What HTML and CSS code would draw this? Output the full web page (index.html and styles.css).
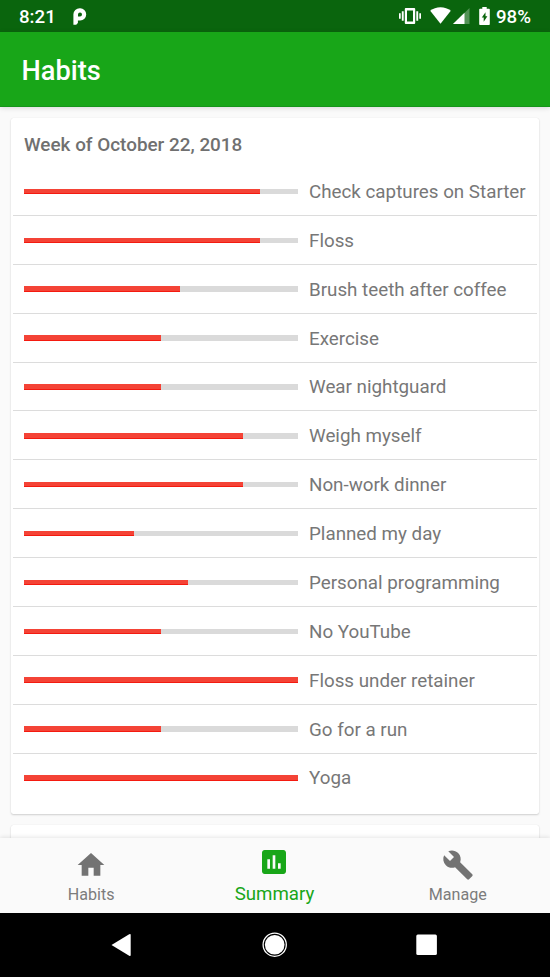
FILE: index.html
```html
<!DOCTYPE html>
<html lang="en">
<head>
<meta charset="utf-8">
<title>Habits</title>
<link rel="stylesheet" href="styles.css">
</head>
<body>
<div class="screen">
  <div class="status">
    <span class="time">8:21</span>
    <svg class="pie" width="14" height="18" viewBox="0 0 14 18"><path fill-rule="evenodd" d="M.4 16.700V6.300A6.300 6 0 0 1 6.800.3 6 5.900 0 0 1 13.200 6.300 6 5.900 0 0 1 7 12.400H4.900v2.600L3.200 16.700zM5 8.400h2A2 2 0 1 0 5 6.400z" fill="#fff"/></svg>
    <svg class="vibrate" width="22" height="16" viewBox="0 0 22 16" fill="#fff"><path d="M6.800 0h8.400q1 0 1 1v14q0 1-1 1H6.800q-1 0-1-1V1q0-1 1-1zM8 2.600v10.800h6V2.600z" fill-rule="evenodd"/><path d="M0 5.200h1.700v5.600H0zM2.800 3.200h1.900v9.600H2.800zM17.300 3.200h1.900v9.600h-1.900zM20.300 5.200H22v5.600h-1.700z"/></svg>
    <svg class="wifi" width="21" height="17" viewBox="0 0 21 17"><path d="M10.500 16.800.2 3.800Q4.500.3 10.500.3T20.800 3.800z" fill="#fff"/></svg>
    <svg class="signal" width="17" height="16" viewBox="0 0 17 16"><path d="M0 16 16.500 0v16z" fill="#fff" opacity=".3"/><path d="M0 16 11.500 4.800V16z" fill="#fff"/></svg>
    <svg class="battery" width="11" height="18" viewBox="0 0 11 18"><path d="M3.300 0h4.400v1.800H10q.8 0 .8.800v14.600q0 .8-.8.800H1q-.8 0-.8-.8V2.600q0-.8.8-.8h2.300z" fill="#fff"/><path d="M6.500 5.200v4h1.900L4.700 14.800v-4.200H2.800z" fill="#0a650d"/></svg>
    <span class="percent">98%</span>
  </div>
  <header class="appbar"><h1>Habits</h1></header>
  <main class="content">
    <section class="card">
      <h2>Week of October 22, 2018</h2>
      <ul>
        <li><span class="track"><span class="fill" style="width:86%"></span></span><span class="name">Check captures on Starter</span></li>
        <li><span class="track"><span class="fill" style="width:86%"></span></span><span class="name">Floss</span></li>
        <li><span class="track"><span class="fill" style="width:57.1%"></span></span><span class="name">Brush teeth after coffee</span></li>
        <li><span class="track"><span class="fill" style="width:50%"></span></span><span class="name">Exercise</span></li>
        <li><span class="track"><span class="fill" style="width:50%"></span></span><span class="name">Wear nightguard</span></li>
        <li><span class="track"><span class="fill" style="width:80%"></span></span><span class="name">Weigh myself</span></li>
        <li><span class="track"><span class="fill" style="width:80%"></span></span><span class="name">Non-work dinner</span></li>
        <li><span class="track"><span class="fill" style="width:40%"></span></span><span class="name">Planned my day</span></li>
        <li><span class="track"><span class="fill" style="width:60%"></span></span><span class="name">Personal programming</span></li>
        <li><span class="track"><span class="fill" style="width:50%"></span></span><span class="name">No YouTube</span></li>
        <li><span class="track"><span class="fill" style="width:100%"></span></span><span class="name">Floss under retainer</span></li>
        <li><span class="track"><span class="fill" style="width:50%"></span></span><span class="name">Go for a run</span></li>
        <li><span class="track"><span class="fill" style="width:100%"></span></span><span class="name">Yoga</span></li>
      </ul>
    </section>
    <section class="card next"></section>
  </main>
  <nav class="tabs">
    <a class="tab"><svg width="32" height="32" viewBox="0 0 24 24"><path d="M10 20v-6h4v6h5v-8h3L12 3 2 12h3v8z"/></svg><span>Habits</span></a>
    <a class="tab active"><svg width="32" height="32" viewBox="0 0 24 24"><path d="M19 3H5c-1.100 0-2 .9-2 2v14c0 1.100.9 2 2 2h14c1.100 0 2-.9 2-2V5c0-1.100-.9-2-2-2zM9 17H7v-7h2v7zm4 0h-2V7h2v10zm4 0h-2v-4h2v4z"/></svg><span>Summary</span></a>
    <a class="tab"><svg width="32" height="32" viewBox="0 0 24 24"><path d="M22.700 19l-9.100-9.100c.9-2.300.4-5-1.500-6.900-2-2-5-2.400-7.400-1.300L9 6 6 9 1.600 4.700C.4 7.100.9 10.100 2.900 12.100c1.900 1.900 4.600 2.400 6.900 1.500l9.100 9.100c.4.4 1 .4 1.400 0l2.300-2.300c.5-.4.5-1.100.1-1.400z"/></svg><span>Manage</span></a>
  </nav>
  <div class="sysnav">
    <svg width="32" height="32" viewBox="0 0 32 32"><path d="M4.500 16 22.200 5.300q1.500-.8 1.500.7v20q0 1.500-1.500.7z" fill="#fff"/></svg>
    <svg width="32" height="32" viewBox="0 0 32 32"><circle cx="15.700" cy="15.700" r="11.600" fill="none" stroke="#fff" stroke-width="1.300"/><circle cx="15.700" cy="15.700" r="9.800" fill="#fff"/></svg>
    <svg width="32" height="32" viewBox="0 0 32 32"><rect x="5.300" y="5.400" width="20.600" height="20.600" rx="1.500" fill="#fff"/></svg>
  </div>
</div>
</body>
</html>
```

FILE: styles.css
```css
* { box-sizing: border-box; }
body { margin: 0; font-family: Roboto, sans-serif; background: #fafafa; }
.screen { width: 550px; height: 977px; display: flex; flex-direction: column; overflow: hidden; }
.status {
  height: 32px; flex: none; display: flex; align-items: flex-start; padding-left: 19px;
  background: #0a650d; color: #fff; font-size: 18.700px; font-weight: 500; line-height: 22px;
}
.time { width: 54px; padding-top: 6px; }
.percent { padding-top: 6px; margin-left: 6px; }
.pie { margin-top: 8px; }
.vibrate { margin: 8px 0 0 312px; }
.wifi { margin: 7px 0 0 9px; }
.signal { margin: 8px 0 0 2px; }
.battery { margin: 7px 0 0 9px; }
.appbar {
  height: 75px; flex: none; display: flex; align-items: center; padding: 3px 21.500px 0;
  background: #18a618; border-bottom: 1px solid #15951a; z-index: 1;
  box-shadow: 0 1px 5px rgba(0, 0, 0, .14);
}
h1 { margin: 0; color: #fff; font-size: 27.200px; font-weight: 500; line-height: 32px; }
.content { flex: 1; min-height: 0; overflow: hidden; padding: 11px 11px 0; }
.card {
  height: 696px; padding: 13px 2.500px 0 2px; background: #fff; border-radius: 2.500px;
  box-shadow: 0 1px 2px rgba(0, 0, 0, .17), 0 0 1px rgba(0, 0, 0, .1);
}
.next { margin-top: 11px; }
h2 { margin: 0 0 8px 11px; height: 28px; color: #707070; font-size: 18.900px; font-weight: 500; line-height: 28px; }
ul { list-style: none; margin: 0; padding: 0; }
li { height: 48.880px; display: flex; align-items: center; padding: 1px 0 0 11px; border-bottom: 1.500px solid #dcdcdc; }
li:last-child { border-bottom-color: transparent; }
.track { width: 274px; height: 5.400px; flex: none; background: #dadada; }
.fill { display: block; height: 100%; background: #f44336; border-bottom: 1px solid #f41a10; }
.name { margin-left: 11px; padding-top: 1px; color: #777; font-size: 18.800px; line-height: 24px; white-space: nowrap; }
.tabs {
  height: 75px; flex: none; display: flex; justify-content: center; background: #fafafa;
  box-shadow: 0 -1px 4px rgba(0, 0, 0, .1); z-index: 1;
}
.tab {
  width: 183.400px; display: flex; flex-direction: column; align-items: center; padding: 11px 1px 0 0;
  color: #737373; fill: currentColor; font-size: 16.100px; line-height: 22px;
}
.tab span { margin-top: 3px; color: #7c7c7c; }
.tab.active { padding-top: 8px; color: #18a618; font-size: 18.700px; }
.tab.active span { margin-top: 5px; color: #18a618; }
.sysnav { height: 64px; flex: none; display: flex; align-items: center; justify-content: center; gap: 120px; background: #000; }
```
